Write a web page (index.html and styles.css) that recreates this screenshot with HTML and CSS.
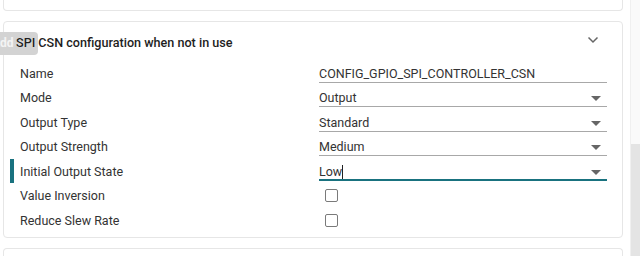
FILE: index.html
```html
<!DOCTYPE html>
<html lang="en">
<head>
<meta charset="UTF-8">
<meta name="viewport" content="width=device-width, initial-scale=1.0">
<title>SPI CSN configuration</title>
<link rel="stylesheet" href="styles.css">
</head>
<body>

<div class="layout">
    <div class="panel">
        <div class="card card-prev">
            <div class="prev-text">Pin drive settings</div>
        </div>

        <div class="card">
            <div class="card-header">
                <span class="card-title">SPI CSN configuration when not in use</span>
                <svg class="chevron" width="12" height="8" viewBox="0 0 12 8">
                    <path d="M1.5 1.5 L6 6 L10.5 1.5" fill="none" stroke="#666" stroke-width="1.5"/>
                </svg>
            </div>

            <div class="row">
                <div class="label">Name</div>
                <div class="field">CONFIG_GPIO_SPI_CONTROLLER_CSN</div>
            </div>
            <div class="row">
                <div class="label">Mode</div>
                <div class="field select">Output<span class="arrow"></span></div>
            </div>
            <div class="row">
                <div class="label">Output Type</div>
                <div class="field select">Standard<span class="arrow"></span></div>
            </div>
            <div class="row">
                <div class="label">Output Strength</div>
                <div class="field select">Medium<span class="arrow"></span></div>
            </div>
            <div class="row active">
                <div class="label">Initial Output State</div>
                <div class="field select focused">Low<span class="caret"></span><span class="arrow"></span></div>
            </div>
            <div class="row">
                <div class="label">Value Inversion</div>
                <div class="check-cell"><span class="checkbox"></span></div>
            </div>
            <div class="row">
                <div class="label">Reduce Slew Rate</div>
                <div class="check-cell"><span class="checkbox"></span></div>
            </div>
        </div>

        <div class="card card-next"></div>

        <div class="ghost">Add SPI</div>
    </div>
    <div class="scrollbar">
        <div class="thumb"></div>
    </div>
</div>

</body>
</html>
```

FILE: styles.css
```css
* {
    box-sizing: border-box;
    margin: 0;
    padding: 0;
}

body {
    background: #fff;
    font-family: Roboto, "Liberation Sans", sans-serif;
    color: #333;
}

.layout {
    display: flex;
    width: 640px;
    height: 256px;
    overflow: hidden;
}

.panel {
    position: relative;
    width: 630px;
    height: 256px;
    overflow: hidden;
    padding: 0 7px 0 3px;
    display: flex;
    flex-direction: column;
    gap: 10px;
}

.card {
    background: #fff;
    border: 1px solid #e6e6e6;
    border-radius: 4px;
    flex-shrink: 0;
}

.card-prev {
    height: 11px;
    border-top: none;
    border-radius: 0 0 4px 4px;
    overflow: hidden;
}

.prev-text {
    margin-top: -16px;
    padding-left: 17px;
    font-size: 13px;
    line-height: 16px;
    color: #333;
}

.card-next {
    height: 20px;
    border-bottom: none;
    border-radius: 4px 4px 0 0;
}

.card-header {
    position: relative;
    z-index: 1;
    display: flex;
    align-items: center;
    justify-content: space-between;
    height: 39px;
    padding: 1px 23px 0 12px;
}

.card-title {
    font-size: 12.6px;
    font-weight: 500;
    color: #1e1e1e;
}

.chevron {
    margin-top: -4px;
}

.row {
    position: relative;
    display: flex;
    align-items: center;
    height: 24.5px;
    padding-left: 16px;
    font-size: 12.5px;
}

.row:last-child {
    margin-bottom: 4px;
}

.row.active::before {
    content: "";
    position: absolute;
    left: 6px;
    top: 0;
    width: 4px;
    height: 24px;
    background: #19727f;
}

.label {
    width: 299px;
    color: #333;
}

.field {
    position: relative;
    width: 288px;
    height: 16px;
    margin-top: 3px;
    border-bottom: 1px solid #a8a8a8;
    line-height: 14px;
    color: #333;
}

.field.focused {
    border-bottom: 2px solid #19727f;
}

.arrow {
    position: absolute;
    right: 6px;
    top: 5px;
    width: 0;
    height: 0;
    border-left: 5px solid transparent;
    border-right: 5px solid transparent;
    border-top: 5px solid #666;
}

.caret {
    display: inline-block;
    width: 1px;
    height: 14px;
    background: #222;
    vertical-align: top;
}

.check-cell {
    padding-left: 6px;
    display: flex;
    align-items: center;
}

.checkbox {
    width: 13px;
    height: 13px;
    border: 1.5px solid #7a7a7a;
    border-radius: 2px;
}

.ghost {
    position: absolute;
    left: 0;
    top: 32px;
    width: 38px;
    height: 23px;
    background: #d3d3d3;
    border-radius: 0 4px 4px 0;
    overflow: hidden;
    color: #f4f4f4;
    font-size: 12px;
    font-weight: 700;
    line-height: 23px;
    text-indent: -8px;
    white-space: nowrap;
}

.scrollbar {
    width: 10px;
    height: 256px;
    border-left: 1px solid #f0f0f0;
    background: #fafafa;
}

.thumb {
    margin-top: 144px;
    width: 9px;
    height: 112px;
    background: #e4e4e4;
}
```
